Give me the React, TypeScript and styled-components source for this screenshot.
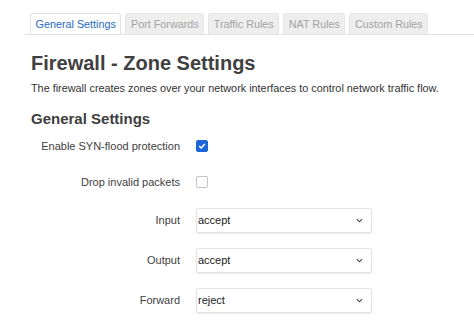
import React from 'react'
import styled, { createGlobalStyle } from 'styled-components'

type Option = { label: string, value: string }

const policies: Option[] = [
  { label: 'accept', value: 'ACCEPT' },
  { label: 'reject', value: 'REJECT' },
  { label: 'drop', value: 'DROP' }
]

const tabs = ['General Settings', 'Port Forwards', 'Traffic Rules', 'NAT Rules', 'Custom Rules']

const App: React.FC = () => {
  return (
    <Page>
      <GlobalStyle />
      <TabBar>
        {tabs.map((tab, i) => (
          <Tab key={tab} active={i === 0}>{tab}</Tab>
        ))}
      </TabBar>

      <Title>Firewall - Zone Settings</Title>
      <Description>
        The firewall creates zones over your network interfaces to control network traffic flow.
      </Description>

      <SectionTitle>General Settings</SectionTitle>

      <Form>
        <Row short>
          <Label>Enable SYN-flood protection</Label>
          <Control><Checkbox type="checkbox" defaultChecked /></Control>
        </Row>
        <Row short>
          <Label>Drop invalid packets</Label>
          <Control><Checkbox type="checkbox" /></Control>
        </Row>
        {renderSelectRow('Input', 'ACCEPT')}
        {renderSelectRow('Output', 'ACCEPT')}
        {renderSelectRow('Forward', 'REJECT')}
      </Form>
    </Page>
  )
}

export default App

const renderSelectRow = (label: string, value: string) => (
  <Row>
    <Label>{label}</Label>
    <Control>
      <SelectWrap>
        <Select defaultValue={value}>
          {policies.map(p => <option key={p.value} value={p.value}>{p.label}</option>)}
        </Select>
        <Chevron viewBox="0 0 8 5" width="7" height="5">
          <path d="M1 1 L4 4 L7 1" fill="none" stroke="#444" strokeWidth="1.2" />
        </Chevron>
      </SelectWrap>
    </Control>
  </Row>
)

const GlobalStyle = createGlobalStyle`
  html, body {
    margin: 0;
    padding: 0;
    background: #fff;
  }

  body {
    font-family: "Liberation Sans", Arial, sans-serif;
    color: #404040;
  }
`

const Page = styled.div`
  width: 474px;
  padding: 13px 0 0 25px;
  box-sizing: border-box;
`

const TabBar = styled.div`
  display: flex;
  gap: 4px;
  padding-left: 5px;
  border-bottom: 1px solid #e2e2e2;
`

const Tab = styled.div<{ active?: boolean }>`
  height: 20px;
  line-height: 20px;
  padding: 0 4.5px;
  font-size: 10.8px;
  border: 1px solid ${p => p.active ? '#e2e2e2' : '#e6e6e6'};
  border-bottom: none;
  border-radius: 3px 3px 0 0;
  margin-bottom: ${p => p.active ? '-1px' : '0'};
  background: ${p => p.active ? '#fff' : '#eee'};
  color: ${p => p.active ? '#1f6bbf' : '#a3a3a3'};
`

const Title = styled.h2`
  margin: 16px 0 0 6px;
  font-size: 20px;
  line-height: 24px;
  font-weight: bold;
  color: #404040;
`

const Description = styled.p`
  margin: 6px 0 0 6px;
  font-size: 10.85px;
  line-height: 14px;
  color: #333;
`

const SectionTitle = styled.h3`
  margin: 15px 0 0 6px;
  font-size: 15px;
  line-height: 18px;
  font-weight: bold;
  color: #404040;
`

const Form = styled.div`
  display: flex;
  flex-direction: column;
`

const Row = styled.div<{ short?: boolean }>`
  display: grid;
  grid-template-columns: 155px 1fr;
  column-gap: 16px;
  align-items: center;
  height: ${p => p.short ? '36px' : '40px'};
`

const Label = styled.label`
  text-align: right;
  font-size: 11px;
  color: #404040;
`

const Control = styled.div`
  display: flex;
  align-items: center;
`

const Checkbox = styled.input`
  appearance: none;
  box-sizing: border-box;
  width: 12px;
  height: 12px;
  margin: 0;
  border: 1px solid #c4c4c4;
  border-radius: 2px;
  background: #fff;
  display: grid;
  place-items: center;

  &:checked {
    border-color: #1a66d6;
    background: #1a66d6 url("data:image/svg+xml,%3Csvg xmlns='http://www.w3.org/2000/svg' viewBox='0 0 12 12'%3E%3Cpath d='M2.6 6.2 L5 8.4 L9.4 3.6' fill='none' stroke='white' stroke-width='1.8'/%3E%3C/svg%3E") center / 100% 100% no-repeat;
  }
`

const SelectWrap = styled.div`
  position: relative;
  width: 176px;
`

const Select = styled.select`
  appearance: none;
  width: 100%;
  height: 25px;
  padding: 0 20px 0 1px;
  font-family: "Liberation Sans", Arial, sans-serif;
  font-size: 11px;
  color: #222;
  background: #fff;
  border: 1px solid #e2e2e2;
  border-radius: 3px;
  box-shadow: 0 1px 2px rgba(0, 0, 0, 0.08);
  outline: none;
`

const Chevron = styled.svg`
  position: absolute;
  right: 9px;
  top: 10px;
  pointer-events: none;
`
